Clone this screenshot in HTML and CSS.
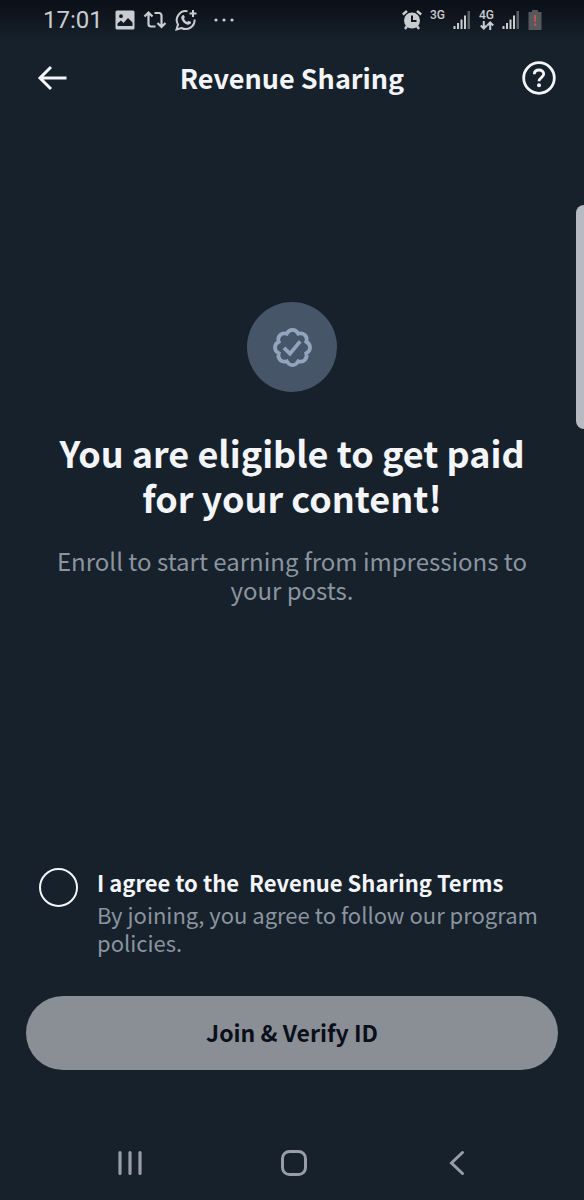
FILE: index.html
```html
<!DOCTYPE html>
<html lang="en">
<head>
<meta charset="utf-8">
<meta name="viewport" content="width=device-width, initial-scale=1">
<title>Revenue Sharing</title>
<link rel="stylesheet" href="styles.css">
</head>
<body>
<div class="screen">
  <div class="status">
    <div class="status-group">
      <span class="clock">17:01</span>
      <svg width="20" height="20" viewBox="0 0 20 20"><path fill="currentColor" fill-rule="evenodd" d="M2 .5h16A1.500 1.500 0 0 1 19.500 2v16a1.500 1.500 0 0 1-1.500 1.500H2A1.500 1.500 0 0 1 .5 18V2A1.500 1.500 0 0 1 2 .5zM6 4.300a1.900 1.900 0 1 0 0 3.800 1.900 1.900 0 0 0 0-3.800zM2.500 16h15v-3.500L13 8l-4.500 5L6 10.500l-3.500 3z"/></svg>
      <svg width="24" height="20" viewBox="0 0 24 20" fill="none" stroke="currentColor" stroke-width="2.200"><path d="M1.500 6.500 5.500 2.500l4 4M5.500 3v11a2.500 2.500 0 0 0 2.500 2.500h4.500M22.500 13l-4 4-4-4M18.500 16.500v-11A2.500 2.500 0 0 0 16 3h-4.500"/></svg>
      <svg width="22" height="22" viewBox="0 0 22 22" fill="none" stroke="currentColor" stroke-width="2"><path d="M12.500 2.200A9 9 0 0 0 3 15.500L1.500 20.500l5-1.500A9 9 0 0 0 19.600 10.500M18 1v7M14.500 4.500h7"/><path fill="currentColor" stroke="none" d="M7.500 6.200c.5-.5 1.200-.4 1.500.2l.8 1.700c.2.500-.5 1.200-.8 1.600.7 1.500 1.800 2.600 3.400 3.300.4-.4 1-1.300 1.500-1.100l1.800.9c.5.300.4 1 .1 1.500-1 1.500-2.500 1.700-4 1.100C9 14.300 7.200 12.400 6.400 9.700c-.4-1.500.1-2.700 1.100-3.500z"/></svg>
      <svg class="status-dots" width="22" height="20" viewBox="0 0 22 20" fill="currentColor"><circle cx="3" cy="10" r="1.600"/><circle cx="11" cy="10" r="1.600"/><circle cx="19" cy="10" r="1.600"/></svg>
    </div>
    <div class="status-group status-right">
      <svg width="20" height="20" viewBox="0 0 20 20"><g stroke="currentColor" stroke-width="2.400" fill="none"><path d="M.8 4.500 5 1M19.200 4.500 15 1M5 16l-2 3M15 16l2 3"/></g><circle cx="10" cy="10.500" r="8" fill="currentColor"/><path d="M10 5.500v5.500h4.500" fill="none" stroke="#10171f" stroke-width="2"/></svg>
      <span class="net">3G</span>
      <svg width="18" height="20" viewBox="0 0 18 20" fill="currentColor"><path d="M.5 16h2v3h-2zM4 13h2v6H4zM7.500 9.500h2V19h-2zM11 5.500h2V19h-2z"/><path opacity=".4" d="M14.500 1h2.500v18h-2.500z"/></svg>
      <span class="net">4G<svg width="14" height="9" viewBox="0 0 14 9" fill="none" stroke="currentColor" stroke-width="2"><path d="M3.800 0v7M.8 4.500l3 3 3-3M10.200 9V2M7.200 4.500l3-3 3 3"/></svg></span>
      <svg width="18" height="20" viewBox="0 0 18 20" fill="currentColor"><path d="M.5 16h2v3h-2zM4 13h2v6H4zM7.500 9.500h2V19h-2zM11 5.500h2V19h-2z"/><path opacity=".4" d="M14.500 1h2.500v18h-2.500z"/></svg>
      <svg width="14" height="20" viewBox="0 0 14 20"><path fill="#55595e" d="M4 0h6v2h3.500v18H.5V2H4z"/><path fill="#c25a48" d="M6 5h2.200l-.4 7H6.400zM6 13.500h2.200v2.200H6z"/></svg>
    </div>
  </div>

  <header class="topbar">
    <button class="icon-button back" type="button" aria-label="Back"><svg width="30" height="26" viewBox="0 0 30 26" fill="none" stroke="currentColor" stroke-width="3"><path d="M29.500 13H3M14 2 3 13l11 11"/></svg></button>
    <h1 class="title">Revenue Sharing</h1>
    <button class="icon-button help" type="button" aria-label="Help"><svg width="34" height="34" viewBox="0 0 34 34" fill="none" stroke="currentColor"><circle cx="17" cy="17" r="15.300" stroke-width="2.800"/><path stroke-width="2.800" d="M12.300 13.200c.1-2.700 2-4.200 4.700-4.200s4.700 1.600 4.700 4.100c0 3.500-4.700 3.400-4.700 7.100"/><circle cx="17" cy="24.300" r="2" fill="currentColor" stroke="none"/></svg></button>
  </header>

  <main class="hero">
    <div class="badge"><svg width="41" height="41" viewBox="0 0 24 24" fill="none" stroke="currentColor" stroke-width="2.200"><path d="M22.250 12c0-1.430-.88-2.670-2.190-3.340.46-1.390.2-2.900-.81-3.910s-2.520-1.270-3.910-.81c-.66-1.310-1.910-2.190-3.340-2.190s-2.670.88-3.330 2.190c-1.400-.46-2.910-.2-3.920.81s-1.260 2.520-.8 3.910c-1.310.67-2.200 1.910-2.200 3.340s.89 2.670 2.200 3.340c-.46 1.390-.21 2.900.8 3.910s2.520 1.260 3.910.81c.67 1.310 1.910 2.190 3.340 2.190s2.680-.88 3.340-2.190c1.390.45 2.900.2 3.910-.81s1.270-2.520.81-3.910c1.310-.67 2.190-1.910 2.190-3.340z"/><path d="m7 12.200 3.500 3.400 6-7.200"/></svg></div>
    <h2 class="headline">You are eligible to get paid for your content!</h2>
    <p class="lead">Enroll to start earning from impressions to your posts.</p>
  </main>

  <form class="enroll">
    <div class="consent">
      <input class="consent-box" type="checkbox" id="agree" aria-describedby="policy">
      <div class="consent-copy">
        <label class="consent-label" for="agree">I agree to the &nbsp;<a class="terms" href="#terms">Revenue Sharing Terms</a></label>
        <p class="policy" id="policy">By joining, you agree to follow our program policies.</p>
      </div>
    </div>
    <button class="join" type="button" disabled>Join &amp; Verify ID</button>
  </form>

  <nav class="navbar" aria-label="System navigation">
    <button class="nav-button" type="button" aria-label="Recent apps"><svg width="26" height="26" viewBox="0 0 26 26" stroke="currentColor" stroke-width="3.200" stroke-linecap="round"><path d="M3 2.500v21M13 2.500v21M23 2.500v21"/></svg></button>
    <button class="nav-button" type="button" aria-label="Home"><svg width="26" height="26" viewBox="0 0 26 26" fill="none" stroke="currentColor" stroke-width="3"><rect x="1.500" y="1.500" width="23" height="23" rx="7"/></svg></button>
    <button class="nav-button" type="button" aria-label="Back"><svg width="26" height="26" viewBox="0 0 26 26" fill="none" stroke="currentColor" stroke-width="3" stroke-linecap="round"><path d="M18.500 2.500 7.500 13l11 10.500"/></svg></button>
  </nav>
  <div class="edge-handle"></div>
</div>
</body>
</html>
```
FILE: styles.css
```css
* { box-sizing: border-box; }

body {
  margin: 0;
  background: #16212b;
  color: #f3f5fa;
  font-family: "Noto Sans CJK SC", "Open Sans", sans-serif;
}

h1, h2, p { margin: 0; }

svg { display: block; flex: none; overflow: visible; }

button {
  padding: 0;
  border: 0;
  background: none;
  color: inherit;
  font: inherit;
}

.screen {
  position: relative;
  display: flex;
  flex-direction: column;
  min-height: 100vh;
}

.status {
  display: flex;
  justify-content: space-between;
  height: 40px;
  padding: 0 42px 0 43px;
  background: linear-gradient(#0b0e16, #16212b);
  color: #c9ccd0;
  font-family: Roboto, sans-serif;
}

.status-group { display: flex; align-items: center; gap: 8px; }
.clock { margin-right: 4px; font-size: 24px; line-height: 28px; }
.status-dots { margin-left: 8px; }

.net {
  display: flex;
  flex-direction: column;
  align-items: center;
  height: 20px;
  font-size: 12px;
  font-weight: 500;
  line-height: 11px;
}

.topbar {
  display: grid;
  grid-template-columns: 1fr auto 1fr;
  align-items: center;
  height: 76px;
  padding: 0 28px;
}

.icon-button {
  display: flex;
  align-items: center;
  justify-content: center;
  width: 34px;
  height: 34px;
}

.back { width: 48px; }
.help { justify-self: end; }

.title { font-size: 27px; font-weight: 700; line-height: 34px; }

.hero {
  display: flex;
  flex: 1;
  flex-direction: column;
  align-items: center;
  justify-content: center;
  padding: 0 48px 78px;
  text-align: center;
}

.badge {
  display: flex;
  align-items: center;
  justify-content: center;
  width: 90px;
  height: 90px;
  margin-bottom: 38px;
  border-radius: 50%;
  background: #475569;
  color: #94a3be;
}

.headline {
  margin-bottom: 26px;
  font-size: 36px;
  font-weight: 700;
  line-height: 45px;
}

.lead {
  color: #8b949f;
  font-size: 24px;
  line-height: 29px;
}

.enroll { padding: 0 26px 56px; }

.consent {
  display: flex;
  gap: 19px;
  padding: 0 0 0 13px;
  margin-bottom: 40px;
}

.consent-box {
  flex: none;
  width: 39px;
  height: 39px;
  margin: 0;
  border: 2px solid #f3f5fa;
  border-radius: 50%;
  appearance: none;
}

.consent-box:checked { background: #1d9bf0; }

.consent-copy { flex: 1; }

.consent-label {
  display: block;
  margin-bottom: 4px;
  font-size: 22px;
  font-weight: 700;
  line-height: 28px;
}

.terms { color: inherit; text-decoration: none; }

.policy {
  color: #8b949f;
  font-size: 22px;
  line-height: 28px;
}

.join {
  display: block;
  width: 100%;
  height: 74px;
  padding-bottom: 2px;
  border-radius: 37px;
  background: #8a8e95;
  color: #0b0f1a;
  font-size: 23px;
  font-weight: 700;
}

.navbar {
  display: flex;
  align-items: center;
  justify-content: space-between;
  height: 74px;
  padding: 0 109px 0 112px;
  color: #979ea8;
}

.nav-button {
  display: flex;
  align-items: center;
  justify-content: center;
  width: 36px;
  height: 36px;
}

.edge-handle {
  position: absolute;
  top: 205px;
  right: 0;
  width: 8px;
  height: 224px;
  border-radius: 8px 0 0 8px;
  background: #b7bac1;
}
```
